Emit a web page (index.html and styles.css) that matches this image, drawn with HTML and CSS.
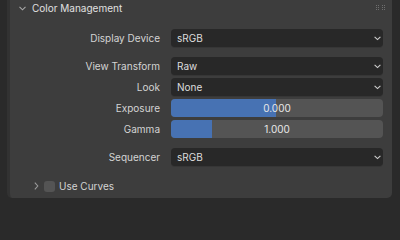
FILE: index.html
```html
<!DOCTYPE html>
<html>
<head>
<meta charset="utf-8">
<link rel="stylesheet" href="styles.css">
</head>
<body>
<div class="area">
  <div class="panel">
    <div class="header">
      <svg class="chev-down" width="7" height="5" viewBox="0 0 7 5"><path d="M0.5 0.8 L3.5 3.8 L6.5 0.8" fill="none" stroke="#a8a8a8" stroke-width="1.1"/></svg>
      <span class="title">Color Management</span>
      <svg class="grip" width="10" height="6" viewBox="0 0 10 6">
        <g fill="#6e6e6e">
          <rect x="0" y="0" width="1" height="1"/><rect x="0" y="2" width="1" height="1"/><rect x="0" y="4" width="1" height="1"/>
          <rect x="2" y="0" width="1" height="1"/><rect x="2" y="2" width="1" height="1"/><rect x="2" y="4" width="1" height="1"/>
          <rect x="6" y="0" width="1" height="1"/><rect x="6" y="2" width="1" height="1"/><rect x="6" y="4" width="1" height="1"/>
          <rect x="8" y="0" width="1" height="1"/><rect x="8" y="2" width="1" height="1"/><rect x="8" y="4" width="1" height="1"/>
        </g>
      </svg>
    </div>

    <div class="group first">
      <div class="row">
        <span class="label">Display Device</span>
        <div class="dropdown"><span>sRGB</span><svg class="chev" width="7" height="5" viewBox="0 0 7 5"><path d="M0.6 0.8 L3.5 3.6 L6.4 0.8" fill="none" stroke="#cfcfcf" stroke-width="1.1"/></svg></div>
      </div>
    </div>

    <div class="group">
      <div class="row">
        <span class="label">View Transform</span>
        <div class="dropdown"><span>Raw</span><svg class="chev" width="7" height="5" viewBox="0 0 7 5"><path d="M0.6 0.8 L3.5 3.6 L6.4 0.8" fill="none" stroke="#cfcfcf" stroke-width="1.1"/></svg></div>
      </div>
      <div class="row">
        <span class="label">Look</span>
        <div class="dropdown"><span>None</span><svg class="chev" width="7" height="5" viewBox="0 0 7 5"><path d="M0.6 0.8 L3.5 3.6 L6.4 0.8" fill="none" stroke="#cfcfcf" stroke-width="1.1"/></svg></div>
      </div>
      <div class="row">
        <span class="label">Exposure</span>
        <div class="slider"><div class="fill" style="width: 49.5%"></div><span class="value">0.000</span></div>
      </div>
      <div class="row">
        <span class="label">Gamma</span>
        <div class="slider"><div class="fill" style="width: 19.5%"></div><span class="value">1.000</span></div>
      </div>
    </div>

    <div class="group">
      <div class="row">
        <span class="label">Sequencer</span>
        <div class="dropdown"><span>sRGB</span><svg class="chev" width="7" height="5" viewBox="0 0 7 5"><path d="M0.6 0.8 L3.5 3.6 L6.4 0.8" fill="none" stroke="#cfcfcf" stroke-width="1.1"/></svg></div>
      </div>
    </div>

    <div class="subpanel">
      <svg class="chev-right" width="5" height="8" viewBox="0 0 5 8"><path d="M0.8 0.6 L3.8 4 L0.8 7.4" fill="none" stroke="#9a9a9a" stroke-width="1.1"/></svg>
      <span class="checkbox"></span>
      <span class="sub-title">Use Curves</span>
    </div>
  </div>
</div>
</body>
</html>
```

FILE: styles.css
```css
html, body {
  margin: 0;
  padding: 0;
}
body {
  width: 400px;
  height: 203px;
  overflow: hidden;
  background: #2a2a2a;
  font-family: Inter, "DejaVu Sans", sans-serif;
  font-size: 10px;
  color: #d6d6d6;
}
.area {
  display: flex;
  height: 203px;
  padding-left: 7px;
  box-sizing: border-box;
}
.panel {
  width: 385px;
  height: 198px;
  background: #3d3d3d;
  border-left: 3px solid #323232;
  box-sizing: border-box;
  border-radius: 0 0 5px 5px;
  padding-right: 9px;
  display: flex;
  flex-direction: column;
}
.header {
  height: 17px;
  display: flex;
  align-items: center;
  margin-right: -9px;
}
.chev-down {
  margin-left: 9px;
}
.title {
  margin-left: 6px;
  color: #e0e0e0;
  line-height: 17px;
}
.grip {
  margin-left: auto;
  margin-right: 6px;
  margin-top: -1px;
}
.group {
  display: flex;
  flex-direction: column;
  gap: 3px;
  margin-top: 10px;
}
.group.first {
  margin-top: 12px;
}
.row {
  display: grid;
  grid-template-columns: 150px 212px;
  column-gap: 11px;
  height: 18px;
  align-items: center;
}
.label {
  text-align: right;
  line-height: 18px;
  color: #d4d4d4;
}
.dropdown {
  height: 18px;
  background: #282828;
  border-radius: 4px;
  box-shadow: 0 1px 0 #363636;
  display: flex;
  align-items: center;
  padding-left: 6px;
  padding-right: 2px;
  box-sizing: border-box;
  color: #dedede;
}
.dropdown .chev {
  margin-left: auto;
}
.slider {
  height: 18px;
  background: #545454;
  border-radius: 4px;
  position: relative;
  overflow: hidden;
  display: flex;
  align-items: center;
  justify-content: center;
}
.fill {
  position: absolute;
  left: 0;
  top: 0;
  bottom: 0;
  background: #4772b3;
}
.value {
  position: relative;
  color: #e8e8e8;
}
.subpanel {
  display: flex;
  align-items: center;
  height: 18px;
  margin-top: 11px;
}
.chev-right {
  margin-left: 24px;
}
.checkbox {
  width: 11px;
  height: 11px;
  background: #545454;
  border-radius: 3px;
  margin-left: 5px;
}
.sub-title {
  margin-left: 4px;
  color: #d4d4d4;
}
```
